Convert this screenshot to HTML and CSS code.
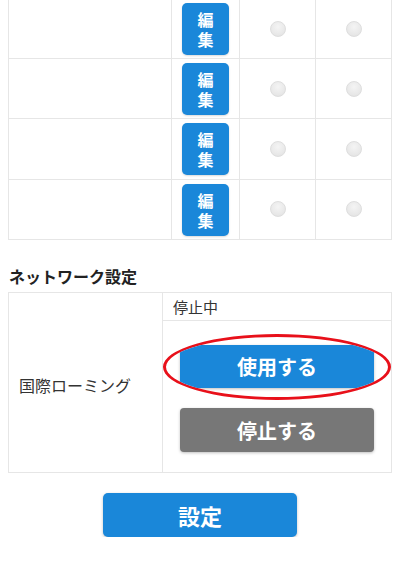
FILE: index.html
```html
<!DOCTYPE html>
<html lang="ja">
<head>
<meta charset="utf-8">
<link rel="stylesheet" href="styles.css">
</head>
<body>
<div class="page">
  <div class="list">
    <div class="row">
      <div class="cell c-name"></div>
      <div class="cell c-edit"><button class="edit-btn"><span class="ch">編</span><span class="ch">集</span></button></div>
      <div class="cell c-radio"><input type="radio" class="radio" name="a1"></div>
      <div class="cell c-radio"><input type="radio" class="radio" name="a1"></div>
    </div>
    <div class="row">
      <div class="cell c-name"></div>
      <div class="cell c-edit"><button class="edit-btn"><span class="ch">編</span><span class="ch">集</span></button></div>
      <div class="cell c-radio"><input type="radio" class="radio" name="a2"></div>
      <div class="cell c-radio"><input type="radio" class="radio" name="a2"></div>
    </div>
    <div class="row">
      <div class="cell c-name"></div>
      <div class="cell c-edit"><button class="edit-btn"><span class="ch">編</span><span class="ch">集</span></button></div>
      <div class="cell c-radio"><input type="radio" class="radio" name="a3"></div>
      <div class="cell c-radio"><input type="radio" class="radio" name="a3"></div>
    </div>
    <div class="row">
      <div class="cell c-name"></div>
      <div class="cell c-edit"><button class="edit-btn"><span class="ch">編</span><span class="ch">集</span></button></div>
      <div class="cell c-radio"><input type="radio" class="radio" name="a4"></div>
      <div class="cell c-radio"><input type="radio" class="radio" name="a4"></div>
    </div>
  </div>

  <h2 class="section-title">ネットワーク設定</h2>

  <div class="net">
    <div class="net-label">国際ローミング</div>
    <div class="net-body">
      <div class="net-status">停止中</div>
      <div class="net-actions">
        <div class="highlight">
          <button class="wide-btn blue">使用する</button>
        </div>
        <button class="wide-btn grey stop">停止する</button>
      </div>
    </div>
  </div>

  <div class="submit-wrap">
    <button class="submit-btn">設定</button>
  </div>
</div>
</body>
</html>
```

FILE: styles.css
```css
* { box-sizing: border-box; }

html, body {
  margin: 0;
  padding: 0;
  background: #fff;
}

body {
  font-family: "Noto Sans CJK JP", "Noto Sans", sans-serif;
  color: #333;
}

.page {
  padding: 0 8px;
}

button {
  font-family: inherit;
  border: none;
  cursor: pointer;
}

/* top list */
.list {
  margin-top: -1px;
  border-left: 1px solid #e6e6e6;
}

.row {
  display: grid;
  grid-template-columns: 163px 68px 76px 76px;
  height: 60px;
}

.row:nth-child(n+3) {
  height: 60.5px;
}

.cell {
  border-right: 1px solid #e6e6e6;
  border-bottom: 1px solid #e6e6e6;
  display: flex;
  align-items: center;
  justify-content: center;
}

.c-edit {
  align-items: flex-start;
  padding-top: 4px;
}

.edit-btn {
  width: 47px;
  height: 52px;
  padding: 6px 0;
  background: #1a87d9;
  color: #fff;
  border-radius: 5px;
  font-size: 16px;
  font-weight: 700;
  display: flex;
  flex-direction: column;
  align-items: center;
  box-shadow: 0 1px 2px rgba(0, 0, 0, 0.15);
}

.ch {
  display: block;
  height: 20px;
  line-height: 20px;
  overflow: visible;
}

.radio {
  -webkit-appearance: none;
  appearance: none;
  margin: 0;
  width: 16px;
  height: 16px;
  border-radius: 50%;
  border: 1px solid #dedede;
  background: radial-gradient(circle at 50% 35%, #f4f4f4 0%, #e9e9e9 60%, #e0e0e0 100%);
}

/* section */
.section-title {
  margin: 25px 0 5px 1px;
  font-size: 16px;
  line-height: 22px;
  font-weight: 700;
  color: #222;
}

.net {
  display: grid;
  grid-template-columns: 154px 1fr;
  border: 1px solid #e6e6e6;
}

.net-label {
  border-right: 1px solid #e6e6e6;
  display: flex;
  align-items: center;
  padding: 4px 0 0 10px;
  font-size: 16px;
  color: #333;
}

.net-status {
  height: 28px;
  line-height: 27px;
  padding-left: 10px;
  font-size: 15px;
  border-bottom: 1px solid #e6e6e6;
  color: #333;
}

.net-actions {
  padding: 13px 0 20px;
}

.highlight {
  border: 3px solid #e8101a;
  border-radius: 50%;
  overflow: hidden;
  padding: 8px 14px 9px;
}

.wide-btn {
  display: block;
  width: 100%;
  height: 43px;
  color: #fff;
  font-size: 20px;
  font-weight: 700;
  border-radius: 4px;
  box-shadow: 0 1px 3px rgba(0, 0, 0, 0.25);
}

.blue { background: #1a87d9; }
.grey { background: #777777; }

.stop {
  height: 44px;
  margin: 8px 17px 0;
  width: calc(100% - 34px);
}

.submit-wrap {
  display: flex;
  justify-content: center;
  padding-top: 20px;
}

.submit-btn {
  width: 194px;
  height: 44px;
  background: #1a87d9;
  color: #fff;
  font-size: 22px;
  font-weight: 700;
  border-radius: 5px;
  box-shadow: 0 1px 3px rgba(0, 0, 0, 0.25);
}
```
